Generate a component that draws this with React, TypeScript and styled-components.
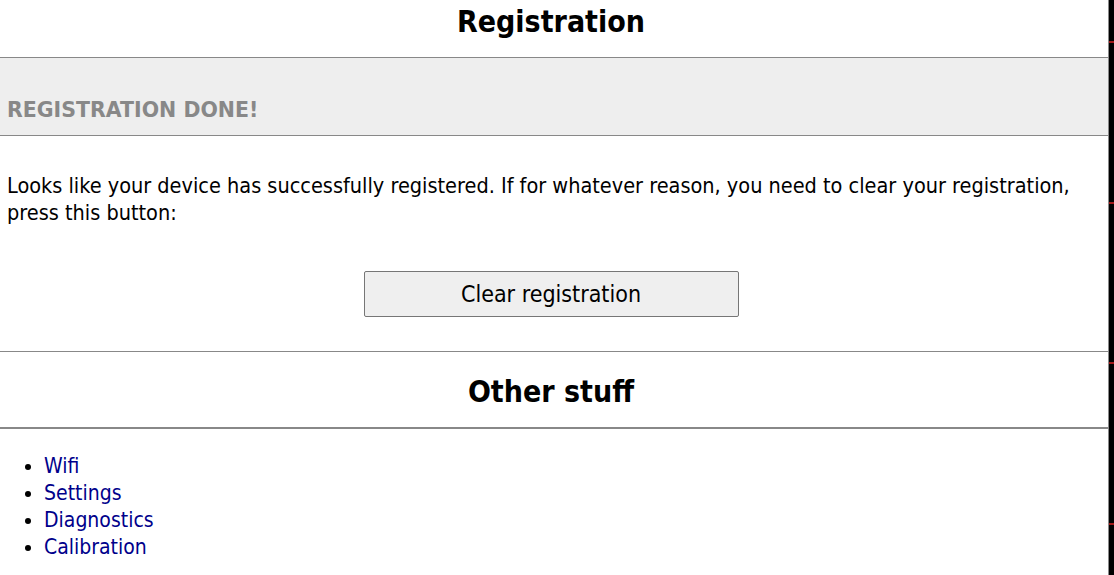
import React from "react";
import styled, { createGlobalStyle } from "styled-components";

const GlobalStyle = createGlobalStyle`
  html, body {
    margin: 0;
    padding: 0;
    background: #ffffff;
  }
  body {
    font-family: "DejaVu Sans Condensed", "DejaVu Sans", sans-serif;
    font-stretch: condensed;
    color: #000000;
  }
`;

const Frame = styled.div`
  display: flex;
  min-height: 575px;
`;

const Page = styled.main`
  flex: 1;
  min-width: 0;
`;

// strip on the right edge of the shot: grey rule, black band, red ticks
const EdgeStrip = styled.div`
  width: 5px;
  border-left: 1px solid #8a8a8a;
  background: repeating-linear-gradient(
    to bottom,
    #000000 0 41px,
    #a01818 41px 43px,
    #000000 43px 160.5px
  );
`;

const Title = styled.h1<{ $second?: boolean }>`
  margin: 0;
  padding: ${(p) => (p.$second ? "22px 6px 17px 0" : "4px 6px 17px 0")};
  font-size: 30px;
  line-height: 36px;
  font-weight: bold;
  text-align: center;
  border-bottom: ${(p) => (p.$second ? "2px" : "1px")} solid #888888;
`;

const Banner = styled.div`
  padding: 39px 7px 11px;
  background: #eeeeee;
  border-bottom: 1px solid #888888;
  font-family: "DejaVu Sans", sans-serif;
  font-stretch: normal;
  font-size: 20.5px;
  line-height: 27px;
  font-weight: bold;
  color: #888888;
  text-transform: uppercase;
`;

const Section = styled.section`
  padding: 36px 7px 34px;
  display: flex;
  flex-direction: column;
  align-items: center;
  gap: 45px;
  border-bottom: 1px solid #888888;
`;

const Text = styled.p`
  margin: 0;
  align-self: stretch;
  font-size: 21.5px;
  line-height: 27px;
`;

const ActionButton = styled.button`
  width: 375px;
  height: 46px;
  padding: 0;
  margin-right: 6px;
  background: #efefef;
  border: 1px solid #767676;
  border-radius: 2px;
  font-family: inherit;
  font-stretch: inherit;
  font-size: 23px;
  color: #000000;
  cursor: pointer;
`;

const LinkList = styled.ul`
  margin: 24px 0 0;
  padding-left: 44px;
  font-size: 21px;
  line-height: 27px;
`;

const LinkItem = styled.li`
  list-style: disc;
`;

const NavLink = styled.a`
  color: #00008b;
  text-decoration: none;
`;

const links = ["Wifi", "Settings", "Diagnostics", "Calibration"];

export default function App() {
  return (
    <Frame>
      <GlobalStyle />
      <Page>
        <Title>Registration</Title>
        <Banner>Registration done!</Banner>
        <Section>
          <Text>
            Looks like your device has successfully registered. If for whatever
            reason, you need to clear your registration, press this button:
          </Text>
          <ActionButton type="button">Clear registration</ActionButton>
        </Section>
        <Title $second>Other stuff</Title>
        <LinkList>
          {links.map((name) => (
            <LinkItem key={name}>
              <NavLink href={"#" + name.toLowerCase()}>{name}</NavLink>
            </LinkItem>
          ))}
        </LinkList>
      </Page>
      <EdgeStrip />
    </Frame>
  );
}
